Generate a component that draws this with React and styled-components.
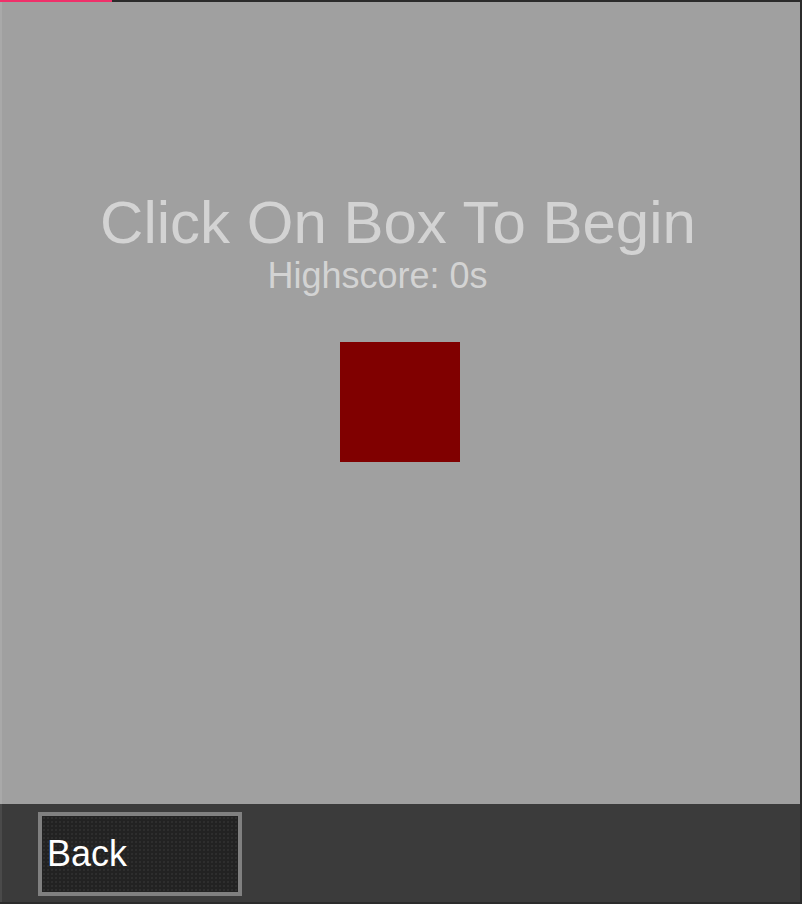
import React from "react";
import styled, { createGlobalStyle } from "styled-components";

const GlobalStyle = createGlobalStyle`
  html, body {
    margin: 0;
    padding: 0;
    background: #2b2b2b;
  }
  * {
    box-sizing: border-box;
  }
`;

const Page = styled.div`
  display: flex;
  flex-direction: column;
  width: 100vw;
  height: 100vh;
  padding: 0 2px 2px 0;
  background-color: #2b2b2b;
  font-family: "Liberation Sans", Arial, Helvetica, sans-serif;
`;

const ProgressTrack = styled.div`
  height: 2px;
  flex-shrink: 0;
`;

const ProgressFill = styled.div`
  height: 100%;
  background-color: #f0306a;
`;

const GameArea = styled.main`
  display: flex;
  flex-direction: column;
  align-items: center;
  height: 802px;
  flex-shrink: 0;
  padding-right: 2px;
  background-color: #a0a0a0;
  border-left: 2px solid rgba(255, 255, 255, 0.1);
`;

const Title = styled.h1`
  margin: 191px 0 0 0;
  padding-right: 4px;
  font-size: 60px;
  font-weight: 400;
  line-height: 1;
  color: #d3d3d3;
  white-space: nowrap;
`;

const Highscore = styled.p`
  margin: 5px 0 0 0;
  padding-right: 45px;
  font-size: 36px;
  line-height: 1;
  color: #d3d3d3;
`;

const TargetBox = styled.div`
  width: 120px;
  height: 120px;
  margin-top: 48px;
  background-color: #800000;
  cursor: pointer;
`;

const Footer = styled.footer`
  flex: 1;
  display: flex;
  align-items: flex-start;
  padding: 8px 0 0 36px;
  background-color: #3b3b3b;
  border-left: 2px solid rgba(255, 255, 255, 0.08);
`;

const BackButton = styled.button`
  width: 204px;
  height: 84px;
  padding: 0 0 0 5px;
  border: 4px solid #808080;
  background-color: #222222;
  background-image: radial-gradient(#343434 0.6px, transparent 0.9px);
  background-size: 4px 4px;
  color: #ffffff;
  font-family: "Liberation Sans", Arial, Helvetica, sans-serif;
  font-size: 36px;
  text-align: left;
  cursor: pointer;
`;

export default function App() {
  const progress = 112;
  return (
    <>
      <GlobalStyle />
      <Page>
        <ProgressTrack>
          <ProgressFill style={{ width: `${progress}px` }} />
        </ProgressTrack>
        <GameArea>
          <Title>Click On Box To Begin</Title>
          <Highscore>Highscore: 0s</Highscore>
          <TargetBox />
        </GameArea>
        <Footer>
          <BackButton>Back</BackButton>
        </Footer>
      </Page>
    </>
  );
}
